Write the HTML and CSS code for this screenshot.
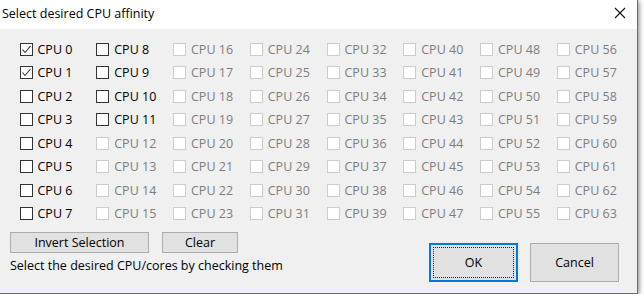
FILE: index.html
```html
<!DOCTYPE html>
<html lang="en">
<head>
    <meta charset="UTF-8">
    <title>Select desired CPU affinity</title>
    <link rel="stylesheet" href="styles.css">
</head>
<body>
    <div class="window">
        <div class="titlebar">
            <span class="title">Select desired CPU affinity</span>
            <span class="close">
                <svg width="12" height="12" viewBox="0 0 12 12"><path d="M1 1 L11 11 M11 1 L1 11" stroke="#111" stroke-width="1.1" fill="none"/></svg>
            </span>
        </div>

        <div class="content">
            <div class="cpu-grid" id="cpuGrid"></div>

            <div class="footer">
                <div class="footer-left">
                    <div class="actions">
                        <button class="win-button invert">Invert Selection</button>
                        <button class="win-button clear">Clear</button>
                    </div>
                    <div class="status">Select the desired CPU/cores by checking them</div>
                </div>
                <div class="dialog-buttons">
                    <button class="win-button big default"><span>OK</span></button>
                    <button class="win-button big">Cancel</button>
                </div>
            </div>
        </div>
    </div>

    <script>
        // 64 cpus, 12 of them present, first two checked
        const grid = document.getElementById('cpuGrid');
        const checkSvg = '<svg width="11" height="11" viewBox="0 0 11 11"><path d="M1.5 5.5 L4 8.5 L9.5 2" stroke="#333" stroke-width="1.1" fill="none"/></svg>';

        for (let row = 0; row < 8; row++) {
            for (let col = 0; col < 8; col++) {
                const n = col * 8 + row;
                const cell = document.createElement('label');
                cell.className = 'cpu';
                if (n > 11) cell.classList.add('disabled');
                const box = document.createElement('span');
                box.className = 'box';
                if (n < 2) box.innerHTML = checkSvg;
                const text = document.createElement('span');
                text.textContent = 'CPU ' + n;
                cell.appendChild(box);
                cell.appendChild(text);
                grid.appendChild(cell);
            }
        }
    </script>
</body>
</html>
```

FILE: styles.css
```css
body {
    margin: 0;
    background-color: #ffffff;
    font-family: 'Open Sans', 'Noto Sans', sans-serif;
    font-size: 12.5px;
    color: #000000;
}

.window {
    width: 638px;
    height: 294px;
    box-sizing: border-box;
    border-right: 1px solid #2a78d6;
    border-bottom: 1px solid #2a78d6;
    box-shadow: 1px 1px 5px rgba(0,0,0,0.5);
    display: flex;
    flex-direction: column;
}

.titlebar {
    height: 29px;
    background-color: #ffffff;
    display: flex;
    align-items: center;
    justify-content: space-between;
    padding-left: 2px;
}

.title {
    margin-top: -3px;
}

.close {
    width: 12px;
    height: 12px;
    margin-right: 11px;
    margin-top: -4px;
}

.close svg {
    display: block;
}

.content {
    flex: 1;
    background-color: #f0f0f0;
    padding-top: 13px;
}

.cpu-grid {
    display: grid;
    grid-template-columns: repeat(8, 76.75px);
    grid-template-rows: repeat(8, 23.5px);
    margin-left: 19.5px;
}

.cpu {
    display: flex;
    align-items: center;
    gap: 5px;
    height: 14px;
    white-space: nowrap;
}

.box {
    width: 13px;
    height: 13px;
    box-sizing: border-box;
    border: 1px solid #333333;
    background-color: #ffffff;
    display: flex;
    align-items: center;
    justify-content: center;
    flex-shrink: 0;
}

.box svg {
    display: block;
}

.cpu.disabled {
    color: #7d7d7d;
}

.cpu.disabled .box {
    border-color: #cccccc;
}

.footer {
    display: flex;
    justify-content: space-between;
}

.footer-left {
    padding-left: 10px;
}

.actions {
    display: flex;
    gap: 13px;
    margin-top: 2px;
}

.win-button {
    font-family: inherit;
    font-size: 12.5px;
    color: #000000;
    background-color: #e1e1e1;
    border: 1px solid #adadad;
    height: 21px;
    padding: 0;
    box-sizing: border-box;
}

.invert {
    width: 139px;
}

.clear {
    width: 76px;
}

.status {
    margin-top: 5px;
    line-height: 16px;
}

.dialog-buttons {
    display: flex;
    gap: 12px;
    margin-top: 13px;
    margin-right: 18px;
}

.big {
    width: 89px;
    height: 39px;
}

.default {
    border: 1px solid #0078d7;
    box-shadow: inset 0 0 0 1px #0078d7;
    position: relative;
}

.default::after {
    content: "";
    position: absolute;
    top: 3px;
    left: 3px;
    right: 3px;
    bottom: 3px;
    border: 1px dotted #222222;
}
```
